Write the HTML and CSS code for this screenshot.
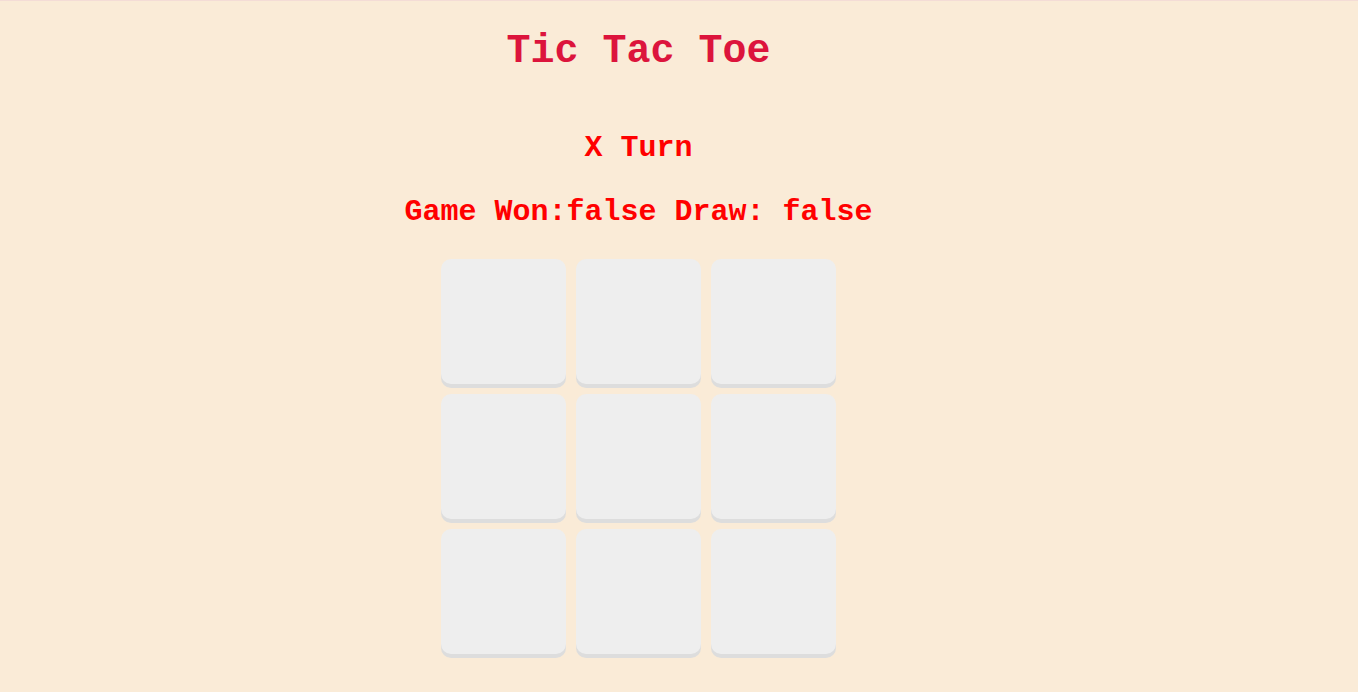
FILE: index.html
```html
<!DOCTYPE html>
<html>
<head>
<meta charset="utf-8">
<link rel="stylesheet" href="styles.css">
</head>
<body>
<div class="app">
  <h1 class="title">Tic Tac Toe</h1>
  <p class="status">X Turn</p>
  <p class="status">Game Won:false Draw: false</p>
  <div class="board">
    <div class="cell"></div>
    <div class="cell"></div>
    <div class="cell"></div>
    <div class="cell"></div>
    <div class="cell"></div>
    <div class="cell"></div>
    <div class="cell"></div>
    <div class="cell"></div>
    <div class="cell"></div>
  </div>
</div>
</body>
</html>
```

FILE: styles.css
```css
html, body {
  margin: 0;
  padding: 0;
  background: #faebd7;
}
body {
  border-top: 1px solid #f4dcd6;
  height: 691px;
  overflow: hidden;
}
.app {
  width: 1277px;
  display: flex;
  flex-direction: column;
  align-items: center;
  padding-top: 28px;
  font-family: "Liberation Mono", "Courier New", monospace;
  font-weight: bold;
}
.title {
  margin: 0 0 57px;
  font-size: 40px;
  line-height: normal;
  color: #dc143c;
}
.status {
  margin: 0 0 30px;
  font-size: 30px;
  line-height: normal;
  color: #ff0000;
}
.board {
  display: grid;
  grid-template-columns: repeat(3, 125px);
  grid-auto-rows: 125px;
  gap: 10px;
}
.cell {
  background: #eeeeee;
  border-radius: 10px;
  box-shadow: 0 4px 0 #dddddd;
}
```
